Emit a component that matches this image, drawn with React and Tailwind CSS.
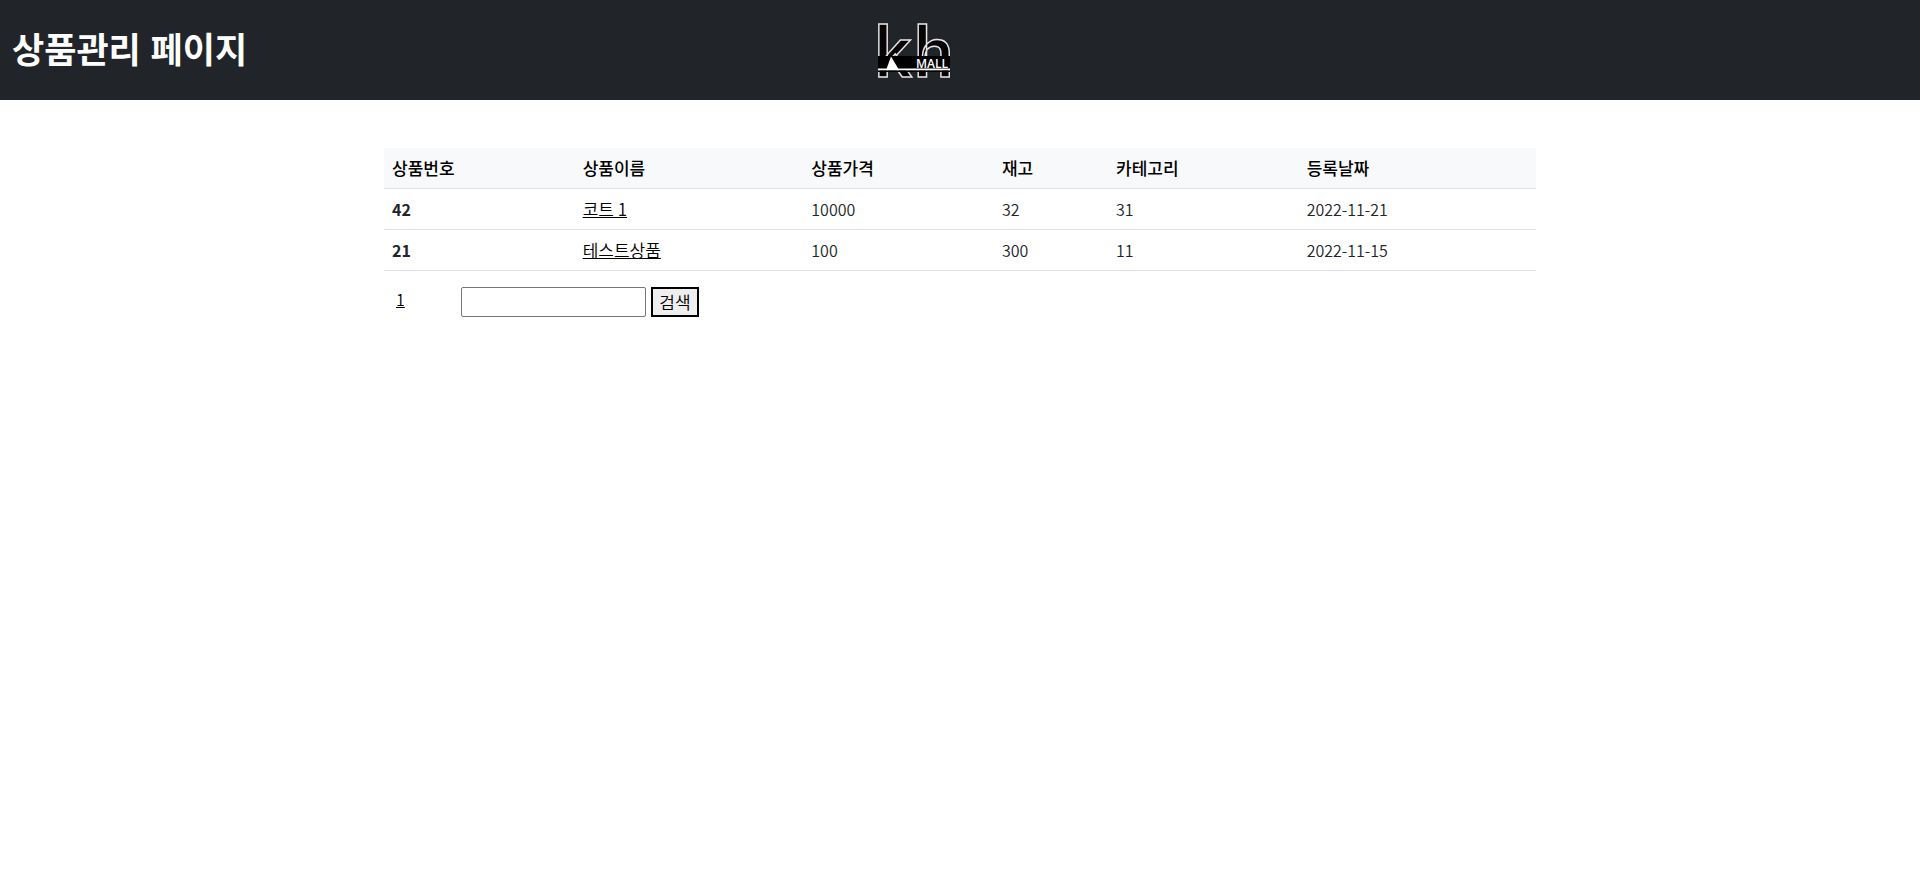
const columns = [
  { label: "상품번호", width: "w-[16.55%]" },
  { label: "상품이름", width: "w-[19.85%]" },
  { label: "상품가격", width: "w-[16.55%]" },
  { label: "재고", width: "w-[9.9%]" },
  { label: "카테고리", width: "w-[16.55%]" },
  { label: "등록날짜", width: "w-[20.6%]" },
];

const products = [
  { id: 42, name: "코트 1", price: 10000, stock: 32, category: 31, date: "2022-11-21" },
  { id: 21, name: "테스트상품", price: 100, stock: 300, category: 11, date: "2022-11-15" },
];

function Logo() {
  return (
    <svg width="84" height="56" viewBox="-6 0 84 56" className="overflow-visible" role="img" aria-label="kh MALL">
      <g fontFamily="Roboto, sans-serif" fontSize="71" fontWeight="500" fill="#070304" stroke="#e4e4e4" strokeWidth="1.4">
        <text x="-3.5" y="55">k</text>
        <text x="36" y="55">h</text>
      </g>
      <rect y="34" width="72" height="13" fill="#000" />
      <path d="M13 34.500L20.500 47H8.500z" fill="#fff" />
      <rect y="46.500" width="72" height="2" fill="#fff" />
      <rect y="48.500" width="72" height="1.500" fill="#000" />
      <text x="38" y="45.500" fontFamily="'Open Sans', sans-serif" fontSize="12" fontWeight="600" fill="#fff">MALL</text>
    </svg>
  );
}

export default function App() {
  return (
    <div className="min-h-screen bg-white font-['Noto_Sans_CJK_KR',sans-serif] text-base text-[#212529]">
      <header className="grid h-[100px] grid-cols-[1fr_auto_1fr] items-center bg-[#212529] pl-3">
        <h1 className="pt-0.5 font-['Liberation_Sans','Noto_Sans_CJK_KR',sans-serif] text-[35px] leading-[42px] font-bold text-white">
          상품관리 페이지
        </h1>
        <a href="#home" className="mr-[104px]">
          <Logo />
        </a>
      </header>
      <main className="mx-auto w-3/5 pt-12">
        <table className="w-full table-fixed border-separate border-spacing-0 text-left leading-6">
          <thead className="bg-[#f8f9fa] text-[17px] text-black">
            <tr>
              {columns.map((c) => (
                <th key={c.label} scope="col" className={`${c.width} border-b border-[#dee2e6] p-2 font-medium`}>
                  {c.label}
                </th>
              ))}
            </tr>
          </thead>
          <tbody className="font-[350] [&>tr>*]:h-[41px] [&>tr>*]:border-b [&>tr>*]:border-[#dee2e6] [&>tr>*]:p-2">
            {products.map((p) => (
              <tr key={p.id}>
                <th scope="row" className="font-bold">{p.id}</th>
                <td>
                  <a href="#product" className="text-[17px] text-black underline">{p.name}</a>
                </td>
                <td>{p.price}</td>
                <td>{p.stock}</td>
                <td>{p.category}</td>
                <td>{p.date}</td>
              </tr>
            ))}
          </tbody>
        </table>
        <div className="flex pt-4 pl-3 font-[350] leading-6">
          <nav className="w-[65px]" aria-label="페이지">
            <a href="#1" className="text-black underline">1</a>
          </nav>
          <form className="flex gap-[5px]" onSubmit={(e) => e.preventDefault()}>
            <input
              type="text"
              aria-label="상품 검색"
              className="h-[30px] w-[185px] rounded-[2px] border border-[#767676] bg-white px-1"
            />
            <button
              type="submit"
              className="flex h-[30px] w-12 items-center justify-center border-2 border-black bg-[#efefef] text-[17px] text-black"
            >
              검색
            </button>
          </form>
        </div>
      </main>
    </div>
  );
}
